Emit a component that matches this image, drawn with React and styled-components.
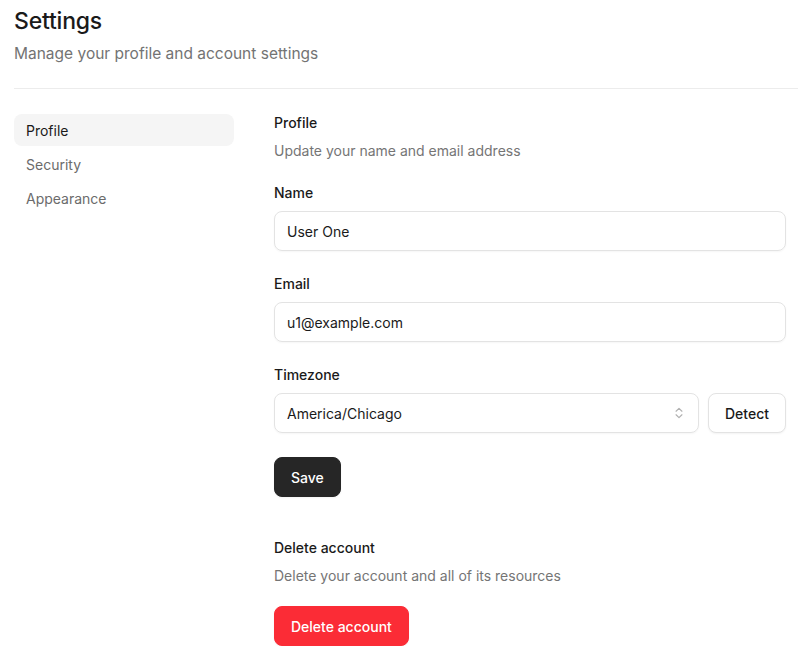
import React from "react";
import styled, { createGlobalStyle } from "styled-components";

const Global = createGlobalStyle`
  body { margin: 0; font-family: Inter, "Noto Sans", sans-serif; color: #1a1a1a; background: #fff; }
  * { box-sizing: border-box; }
`;
const Page = styled.div`padding: 6px 12px 0 14px;`;
const Title = styled.h1`margin: 0; font-size: 23px; font-weight: 500; line-height: 30px; letter-spacing: -0.2px;`;
const Sub = styled.p`margin: 6px 0 0; font-size: 15.5px; color: #737373; line-height: 24px;`;
const Divider = styled.hr`border: 0; border-top: 1px solid #ececec; margin: 22px -12px 25px 0;`;
const Body = styled.div`display: flex; gap: 40px;`;
const Nav = styled.nav`width: 220px; display: flex; flex-direction: column; gap: 2px; flex-shrink: 0;`;
const NavItem = styled.div`
  height: 32px; display: flex; align-items: center; padding: 0 12px; border-radius: 8px;
  font-size: 14px; color: ${p => p.$active ? "#1a1a1a" : "#6b6b6b"};
  background: ${p => p.$active ? "#f5f5f5" : "transparent"};
`;
const Content = styled.div`flex: 1; display: flex; flex-direction: column; padding-top: 0;`;
const H2 = styled.h2`margin: 0; font-size: 14px; font-weight: 500; line-height: 18px;`;
const Desc = styled.p`margin: 10px 0 0; font-size: 14px; color: #757575; line-height: 18px;`;
const Field = styled.div`display: flex; flex-direction: column; gap: 9px; margin-top: ${p => p.$mt}px;`;
const Label = styled.label`font-size: 14px; font-weight: 500; line-height: 18px;`;
const Input = styled.div`
  height: 40px; border: 1px solid #e3e3e3; border-radius: 8px; display: flex; align-items: center;
  padding: 0 12px; font-size: 14px; box-shadow: 0 1px 2px rgba(0,0,0,0.04); flex: ${p => p.$grow ? 1 : "none"};
  justify-content: space-between;
`;
const Row = styled.div`display: flex; gap: 9px;`;
const Btn = styled.button`
  height: 40px; padding: 0 ${p => p.$px || 16}px; border-radius: 8px; font-family: inherit; font-size: 14px; font-weight: 500;
  border: 1px solid ${p => p.$bg ? p.$bg : "#e3e3e3"}; background: ${p => p.$bg || "#fff"};
  color: ${p => p.$bg ? "#fff" : "#1a1a1a"}; align-self: flex-start; box-shadow: 0 1px 2px rgba(0,0,0,0.05);
`;

export default function App() {
  return (
    <Page>
      <Global />
      <Title>Settings</Title>
      <Sub>Manage your profile and account settings</Sub>
      <Divider />
      <Body>
        <Nav>
          <NavItem $active>Profile</NavItem>
          <NavItem>Security</NavItem>
          <NavItem>Appearance</NavItem>
        </Nav>
        <Content>
          <H2 style={{ marginTop: 0 }}>Profile</H2>
          <Desc>Update your name and email address</Desc>
          <Field $mt={24}><Label>Name</Label><Input>User One</Input></Field>
          <Field $mt={24}><Label>Email</Label><Input>u1@example.com</Input></Field>
          <Field $mt={24}>
            <Label>Timezone</Label>
            <Row>
              <Input $grow>America/Chicago
                <svg width="14" height="14" viewBox="0 0 24 24" fill="none" stroke="#b0b0b0" strokeWidth="2" strokeLinecap="round" strokeLinejoin="round"><path d="m7 15 5 5 5-5"/><path d="m7 9 5-5 5 5"/></svg>
              </Input>
              <Btn $px={16}>Detect</Btn>
            </Row>
          </Field>
          <Btn $bg="#262626" style={{ marginTop: 24 }}>Save</Btn>
          <H2 style={{ marginTop: 42 }}>Delete account</H2>
          <Desc>Delete your account and all of its resources</Desc>
          <Btn $bg="#fb2c36" style={{ marginTop: 21 }}>Delete account</Btn>
        </Content>
      </Body>
    </Page>
  );
}
